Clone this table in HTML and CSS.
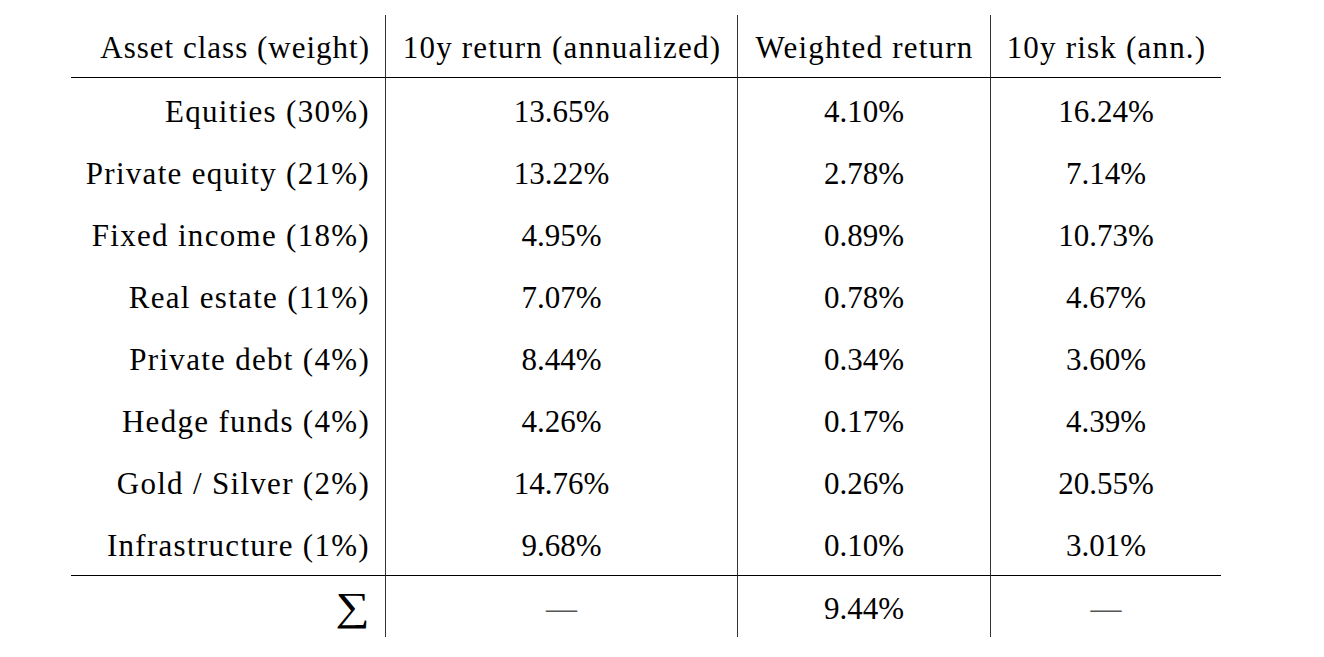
FILE: index.html
```html
<!DOCTYPE html>
<html lang="en">
<head>
<meta charset="utf-8">
<title>Asset class returns</title>
<link rel="stylesheet" href="styles.css">
</head>
<body>
<div class="table">
  <div class="cell head label">Asset class (weight)</div>
  <div class="cell head text sep">10y return (annualized)</div>
  <div class="cell head text sep">Weighted return</div>
  <div class="cell head text sep">10y risk (ann.)</div>

  <div class="cell body first label">Equities (30%)</div>
  <div class="cell body first num sep">13.65%</div>
  <div class="cell body first num sep">4.10%</div>
  <div class="cell body first num sep">16.24%</div>

  <div class="cell body label">Private equity (21%)</div>
  <div class="cell body num sep">13.22%</div>
  <div class="cell body num sep">2.78%</div>
  <div class="cell body num sep">7.14%</div>

  <div class="cell body label">Fixed income (18%)</div>
  <div class="cell body num sep">4.95%</div>
  <div class="cell body num sep">0.89%</div>
  <div class="cell body num sep">10.73%</div>

  <div class="cell body label">Real estate (11%)</div>
  <div class="cell body num sep">7.07%</div>
  <div class="cell body num sep">0.78%</div>
  <div class="cell body num sep">4.67%</div>

  <div class="cell body label">Private debt (4%)</div>
  <div class="cell body num sep">8.44%</div>
  <div class="cell body num sep">0.34%</div>
  <div class="cell body num sep">3.60%</div>

  <div class="cell body label">Hedge funds (4%)</div>
  <div class="cell body num sep">4.26%</div>
  <div class="cell body num sep">0.17%</div>
  <div class="cell body num sep">4.39%</div>

  <div class="cell body label">Gold / Silver (2%)</div>
  <div class="cell body num sep">14.76%</div>
  <div class="cell body num sep">0.26%</div>
  <div class="cell body num sep">20.55%</div>

  <div class="cell body last label">Infrastructure (1%)</div>
  <div class="cell body last num sep">9.68%</div>
  <div class="cell body last num sep">0.10%</div>
  <div class="cell body last num sep">3.01%</div>

  <div class="cell total label"><span class="sigma">&#8721;</span></div>
  <div class="cell total num sep"><span class="dash">&#8212;</span></div>
  <div class="cell total num sep">9.44%</div>
  <div class="cell total num sep"><span class="dash">&#8212;</span></div>
</div>
</body>
</html>
```

FILE: styles.css
```css
html, body {
  margin: 0;
  padding: 0;
  background: #ffffff;
}

body {
  font-family: "Liberation Serif", "Times New Roman", serif;
  font-size: 31px;
  color: #000000;
}

.table {
  display: grid;
  grid-template-columns: 314px 352px 253px 231px;
  width: 1150px;
  margin: 15px 0 0 71px;
}

.cell {
  box-sizing: border-box;
  display: flex;
  align-items: center;
  justify-content: center;
  height: 62px;
  padding-top: 4px;
  white-space: nowrap;
  line-height: normal;
}

.sep {
  border-left: 1px solid #333333;
}

.label {
  justify-content: flex-end;
  padding-right: 15px;
  letter-spacing: 1.3px;
}

.head.label {
  letter-spacing: 1px;
}

.text {
  letter-spacing: 1.2px;
  padding-left: 1px;
}

.num {
  letter-spacing: 0;
}

.head {
  height: 63px;
  padding-top: 4px;
  border-bottom: 1px solid #000000;
}

.body.first {
  height: 63px;
  padding-top: 5px;
}

.body.last {
  height: 63px;
  padding-top: 4px;
  border-bottom: 1px solid #000000;
}

.total {
  height: 61px;
  padding-top: 5px;
}

.sigma {
  display: inline-block;
  font-size: 40px;
  line-height: 1;
  letter-spacing: 0;
  margin-bottom: 4px;
  transform: scaleX(1.2);
  transform-origin: right center;
}

.dash {
  color: #555555;
}
```
